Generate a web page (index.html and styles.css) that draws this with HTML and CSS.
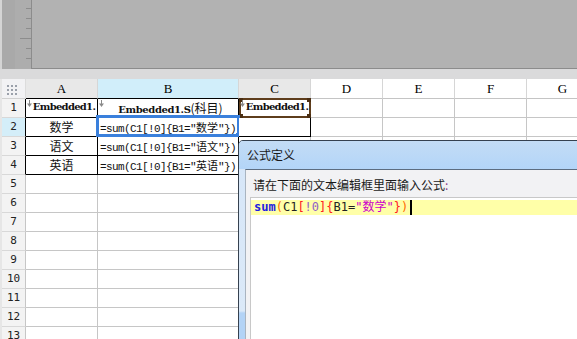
FILE: index.html
```html
<!DOCTYPE html>
<html lang="zh">
  <head>
    <meta charset="UTF-8" />
    <title>公式定义</title>
    <link rel="stylesheet" href="styles.css">
  </head>
  <body>
    <div class="top">
      <div class="edge-strip"></div>
      <div class="ruler">
        <svg width="29" height="69" viewBox="0 0 29 69">
          <g stroke="#8c8c8c" stroke-width="1">
            <line x1="24" y1="8.5" x2="29" y2="8.5" />
            <line x1="24" y1="18.5" x2="29" y2="18.5" />
            <line x1="24" y1="28.5" x2="29" y2="28.5" />
            <line x1="18" y1="38.5" x2="29" y2="38.5" />
            <line x1="24" y1="48.5" x2="29" y2="48.5" />
            <line x1="24" y1="58.5" x2="29" y2="58.5" />
          </g>
        </svg>
      </div>
      <div class="canvas"></div>
    </div>
    <div class="band"></div>

    <div class="sheet">
      <div class="corner">
        <svg width="11" height="11" viewBox="0 0 11 11">
          <g fill="#9aa0aa">
            <rect x="0" y="0" width="2" height="2" /><rect x="4" y="0" width="2" height="2" /><rect x="8" y="0" width="2" height="2" />
            <rect x="0" y="4" width="2" height="2" /><rect x="4" y="4" width="2" height="2" /><rect x="8" y="4" width="2" height="2" />
            <rect x="0" y="8" width="2" height="2" /><rect x="4" y="8" width="2" height="2" /><rect x="8" y="8" width="2" height="2" />
          </g>
        </svg>
      </div>
      <div class="col-head used blk">A</div>
      <div class="col-head sel blk">B</div>
      <div class="col-head used">C</div>
      <div class="col-head">D</div>
      <div class="col-head">E</div>
      <div class="col-head">F</div>
      <div class="col-head">G</div>

      <!-- row 1 -->
      <div class="row-head blk">1</div>
      <div class="cell blk">
        <svg class="mark" width="5" height="7" viewBox="0 0 5 7"><line x1="2.5" y1="0" x2="2.5" y2="4" stroke="#8a8a8a" /><polygon points="0,3.5 5,3.5 2.5,7" fill="#8a8a8a" /></svg>
        <div class="embed">Embedded1.</div>
      </div>
      <div class="cell blk">
        <svg class="mark" width="5" height="7" viewBox="0 0 5 7"><line x1="2.5" y1="0" x2="2.5" y2="4" stroke="#8a8a8a" /><polygon points="0,3.5 5,3.5 2.5,7" fill="#8a8a8a" /></svg>
        <div class="embed wide">Embedded1.S<span class="zh">(科目)</span></div>
      </div>
      <div class="cell blk">
        <div class="embed-box"><i class="h tl"></i><i class="h tr"></i><i class="h bl"></i><i class="h br"></i></div>
        <svg class="mark" width="5" height="7" viewBox="0 0 5 7"><line x1="2.5" y1="0" x2="2.5" y2="4" stroke="#8a8a8a" /><polygon points="0,3.5 5,3.5 2.5,7" fill="#8a8a8a" /></svg>
        <div class="embed">Embedded1.</div>
      </div>
      <div class="cell"></div><div class="cell"></div><div class="cell"></div><div class="cell"></div>

      <!-- row 2 -->
      <div class="row-head sel blk">2</div>
      <div class="cell blk"><div class="zh-cell">数学</div></div>
      <div class="cell blk">
        <div class="formula">=sum(C1[!0]{B1="<span class="zh">数学</span>"})</div>
        <div class="selection"><i class="grip"></i></div>
      </div>
      <div class="cell blk"></div>
      <div class="cell"></div><div class="cell"></div><div class="cell"></div><div class="cell"></div>

      <!-- row 3 -->
      <div class="row-head blk">3</div>
      <div class="cell blk"><div class="zh-cell">语文</div></div>
      <div class="cell blk"><div class="formula">=sum(C1[!0]{B1="<span class="zh">语文</span>"})</div></div>
      <div class="cell"></div><div class="cell"></div><div class="cell"></div><div class="cell"></div><div class="cell"></div>

      <!-- row 4 -->
      <div class="row-head blk">4</div>
      <div class="cell blk"><div class="zh-cell">英语</div></div>
      <div class="cell blk"><div class="formula">=sum(C1[!0]{B1="<span class="zh">英语</span>"})</div></div>
      <div class="cell"></div><div class="cell"></div><div class="cell"></div><div class="cell"></div><div class="cell"></div>

      <div class="row-head">5</div><div class="cell"></div><div class="cell"></div><div class="cell"></div><div class="cell"></div><div class="cell"></div><div class="cell"></div><div class="cell"></div>
      <div class="row-head">6</div><div class="cell"></div><div class="cell"></div><div class="cell"></div><div class="cell"></div><div class="cell"></div><div class="cell"></div><div class="cell"></div>
      <div class="row-head">7</div><div class="cell"></div><div class="cell"></div><div class="cell"></div><div class="cell"></div><div class="cell"></div><div class="cell"></div><div class="cell"></div>
      <div class="row-head">8</div><div class="cell"></div><div class="cell"></div><div class="cell"></div><div class="cell"></div><div class="cell"></div><div class="cell"></div><div class="cell"></div>
      <div class="row-head">9</div><div class="cell"></div><div class="cell"></div><div class="cell"></div><div class="cell"></div><div class="cell"></div><div class="cell"></div><div class="cell"></div>
      <div class="row-head">10</div><div class="cell"></div><div class="cell"></div><div class="cell"></div><div class="cell"></div><div class="cell"></div><div class="cell"></div><div class="cell"></div>
      <div class="row-head">11</div><div class="cell"></div><div class="cell"></div><div class="cell"></div><div class="cell"></div><div class="cell"></div><div class="cell"></div><div class="cell"></div>
      <div class="row-head">12</div><div class="cell"></div><div class="cell"></div><div class="cell"></div><div class="cell"></div><div class="cell"></div><div class="cell"></div><div class="cell"></div>
      <div class="row-head">13</div><div class="cell"></div><div class="cell"></div><div class="cell"></div><div class="cell"></div><div class="cell"></div><div class="cell"></div><div class="cell"></div>
    </div>

    <!-- Formula dialog -->
    <div class="dialog">
      <div class="dlg-title">公式定义</div>
      <div class="dlg-body">
        <div class="dlg-label">请在下面的文本编辑框里面输入公式<span class="colon">:</span></div>
        <div class="editor">
          <div class="code-line"><b class="fn">sum</b><span class="paren">(</span>C1<span class="brk">[</span><span class="num">!0</span><span class="brk">]{</span>B1=<span class="str">"数学"</span><span class="brk">}</span><span class="paren">)</span><span class="caret"></span></div>
        </div>
      </div>
    </div>
  </body>
</html>
```

FILE: styles.css
```css
html,
body {
  margin: 0;
  padding: 0;
}
body {
  position: relative;
  height: 339px;
  overflow: hidden;
  background: #e6e6e6;
  font-family: "Noto Sans CJK SC", sans-serif;
  color: #111;
}

/* Top canvas */
.top {
  display: flex;
  height: 69px;
}
.edge-strip {
  width: 2px;
  background: #d4d4d4;
}
.ruler {
  width: 29px;
  background: linear-gradient(to right, #a9a9a9 13px, #adadad 13px);
  border-right: 1px solid #8c8c8c;
}
.ruler svg {
  display: block;
}
.canvas {
  flex: 1;
  background: #b2b2b2;
  border-bottom: 1px solid #8c8c8c;
}
.band {
  height: 10px;
  background: #dadadb;
}

/* Sheet */
.sheet {
  display: grid;
  grid-template-columns: 24px 72px 141px repeat(5, 72px);
  grid-template-rows: 20px;
  grid-auto-rows: 19px;
  margin-left: 2px;
}
.sheet > div {
  box-sizing: border-box;
}
.corner {
  display: flex;
  align-items: center;
  justify-content: center;
  background: #f2f2f4;
  border-right: 1px solid #dcdcdc;
  border-bottom: 1px solid #d0d0d0;
}
.corner svg {
  margin: 3px 2px 0 0;
}
.col-head {
  background: #fff;
  border-right: 1px solid #d6d6d6;
  border-bottom: 1px solid #c4c4c4;
  font: 13px/20px "Liberation Serif", serif;
  text-align: center;
  color: #000;
}
.col-head.used {
  background: #e8e8e8;
}
.col-head.sel {
  background: #d1eefa;
}
.col-head.blk {
  border-bottom-color: #000;
}
.row-head {
  background: #f3f3f3;
  border-right: 1px solid #c6c6c6;
  border-bottom: 1px solid #d8d8d8;
  font: 11px/18px "DejaVu Sans Mono", monospace;
  text-align: center;
  color: #222;
}
.row-head.sel {
  background: #d4eef9;
}
.row-head.blk {
  border-right-color: #000;
}
.cell {
  position: relative;
  background: #fff;
  border-right: 1px solid #c6c6c6;
  border-bottom: 1px solid #c6c6c6;
}
.cell.blk {
  border-color: #000;
}

/* Cell content */
.embed {
  padding-left: 5px;
  font: bold 10px/16px "DejaVu Serif", "Noto Sans CJK SC", serif;
  letter-spacing: -0.7px;
  text-align: center;
  white-space: nowrap;
}
.embed.wide {
  padding-top: 1px;
  letter-spacing: -0.4px;
}
.embed .zh {
  font-family: "Noto Sans CJK SC", sans-serif;
  font-weight: normal;
  font-size: 12px;
  letter-spacing: 0;
}
.mark {
  position: absolute;
  left: 1px;
  top: 1px;
}
.embed-box {
  position: absolute;
  left: 0;
  top: -1px;
  right: -1px;
  bottom: -1px;
  border: 2px solid #5e3d1c;
}
.embed-box .h {
  position: absolute;
  width: 4px;
  height: 4px;
  background: #4a2e12;
}
.h.tl { left: -2px; top: -2px; }
.h.tr { right: -2px; top: -2px; }
.h.bl { left: -2px; bottom: -2px; }
.h.br { right: -2px; bottom: -2px; }

.zh-cell {
  font-size: 12px;
  line-height: 18px;
  text-align: center;
}
.formula {
  padding-left: 2px;
  font: 11px/18px "Liberation Mono", monospace;
  letter-spacing: -0.6px;
  white-space: nowrap;
}
.formula .zh {
  font-family: "Noto Sans CJK SC", sans-serif;
  font-size: 11px;
  letter-spacing: 0;
}
.selection {
  position: absolute;
  left: -2px;
  top: -3px;
  right: -2px;
  bottom: -1px;
  border: 3px solid #3a80dc;
}
.grip {
  position: absolute;
  right: -4px;
  bottom: -4px;
  width: 5px;
  height: 5px;
  background: #3a80dc;
}

/* Dialog */
.dialog {
  position: absolute;
  left: 238px;
  top: 140px;
  width: 360px;
  height: 230px;
  display: flex;
  flex-direction: column;
  border: 1px solid #35414f;
  border-radius: 5px 5px 0 0;
  background: linear-gradient(#d6e6f8 0, #dbe9f8 170px, #b3d3f6 172px);
}
.dlg-title {
  height: 28px;
  padding-left: 8px;
  background: linear-gradient(#c3dcf5, #b3d5f8);
  border-radius: 4px 4px 0 0;
  font-size: 12px;
  line-height: 28px;
  color: #1a1a1a;
}
.dlg-body {
  flex: 1;
  display: flex;
  flex-direction: column;
  margin-left: 6px;
  background: #f2f2f4;
  border-top: 1px solid #5d6d80;
  border-left: 1px solid #a9b4c0;
}
.dlg-label {
  height: 27px;
  padding: 2px 0 0 7px;
  box-sizing: border-box;
  font-size: 12px;
  line-height: 25px;
  color: #1a1a1a;
}
.colon {
  color: #8a3c8a;
}
.editor {
  flex: 1;
  margin-left: 4px;
  padding-top: 2px;
  background: #fff;
  border-top: 1px solid #c8c8c8;
  border-left: 1px solid #c8c8c8;
}
.code-line {
  height: 15px;
  padding-left: 3px;
  background: #ffffa8;
  font: 12px/15px "DejaVu Sans Mono", "Noto Sans CJK SC", monospace;
  color: #222;
  white-space: nowrap;
}
.fn {
  color: #2020e0;
}
.paren {
  color: #ff6a00;
}
.brk {
  color: #ff2020;
}
.num {
  color: #9060c8;
}
.str {
  color: #cc00cc;
}
.caret {
  display: inline-block;
  width: 2px;
  height: 15px;
  margin-left: 2px;
  vertical-align: top;
  background: #000;
}
```
